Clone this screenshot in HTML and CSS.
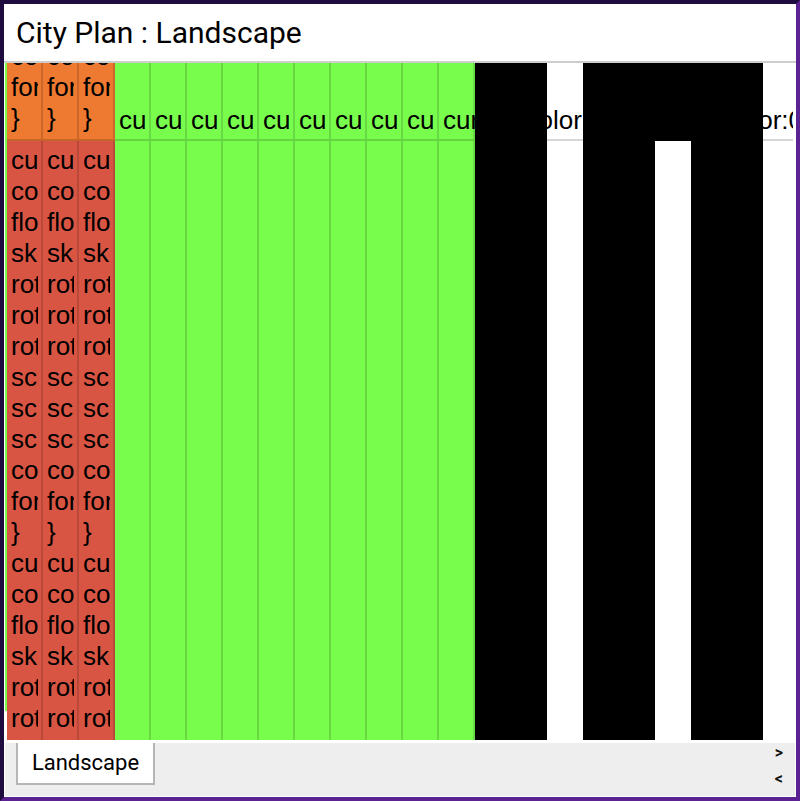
FILE: index.html
```html
<!DOCTYPE html>
<html lang="en">
<head>
<meta charset="utf-8">
<title>City Plan : Landscape</title>
<link rel="stylesheet" href="styles.css">
</head>
<body>
<div class="frame">
  <header class="title-bar"><h1 class="title">City Plan : Landscape</h1></header>
  <main class="sheet">
    <div class="edge"></div>
    <div class="table">
      <div class="row head">
        <div class="cell orange"><div class="clip"><div>color:#000;</div><div>font-size:24px;</div><div>}</div></div></div>
        <div class="cell orange"><div class="clip"><div>color:#000;</div><div>font-size:24px;</div><div>}</div></div></div>
        <div class="cell orange"><div class="clip"><div>color:#000;</div><div>font-size:24px;</div><div>}</div></div></div>
        <div class="cell green"><div class="clip"><div>cursor:pointer;</div></div></div>
        <div class="cell green"><div class="clip"><div>cursor:pointer;</div></div></div>
        <div class="cell green"><div class="clip"><div>cursor:pointer;</div></div></div>
        <div class="cell green"><div class="clip"><div>cursor:pointer;</div></div></div>
        <div class="cell green"><div class="clip"><div>cursor:pointer;</div></div></div>
        <div class="cell green"><div class="clip"><div>cursor:pointer;</div></div></div>
        <div class="cell green"><div class="clip"><div>cursor:pointer;</div></div></div>
        <div class="cell green"><div class="clip"><div>cursor:pointer;</div></div></div>
        <div class="cell green"><div class="clip"><div>cursor:pointer;</div></div></div>
        <div class="cell green"><div class="free"><div>cursor:<span class="nudge">color</span></div></div></div>
        <div class="cell black"></div>
        <div class="cell black"></div>
        <div class="cell blank"></div>
        <div class="cell black"></div>
        <div class="cell black"></div>
        <div class="cell black"></div>
        <div class="cell black"></div>
        <div class="cell black"><div class="free pull"><div>color:0</div></div></div>
        <div class="cell blank last"></div>
      </div>
      <div class="row body">
        <div class="cell red"><div class="clip"><div>cursor:pointer;</div><div>color:#000;</div><div>float:left;</div><div>skew:0deg;</div><div>rotateX:0deg;</div><div>rotateY:0deg;</div><div>rotateZ:0deg;</div><div>scaleX:1;</div><div>scaleY:1;</div><div>scaleZ:1;</div><div>color:#000;</div><div>font-size:24px;</div><div>}</div><div>cursor:pointer;</div><div>color:#000;</div><div>float:left;</div><div>skew:0deg;</div><div>rotateX:0deg;</div><div>rotateY:0deg;</div><div>rotateZ:0deg;</div></div></div>
        <div class="cell red"><div class="clip"><div>cursor:pointer;</div><div>color:#000;</div><div>float:left;</div><div>skew:0deg;</div><div>rotateX:0deg;</div><div>rotateY:0deg;</div><div>rotateZ:0deg;</div><div>scaleX:1;</div><div>scaleY:1;</div><div>scaleZ:1;</div><div>color:#000;</div><div>font-size:24px;</div><div>}</div><div>cursor:pointer;</div><div>color:#000;</div><div>float:left;</div><div>skew:0deg;</div><div>rotateX:0deg;</div><div>rotateY:0deg;</div><div>rotateZ:0deg;</div></div></div>
        <div class="cell red"><div class="clip"><div>cursor:pointer;</div><div>color:#000;</div><div>float:left;</div><div>skew:0deg;</div><div>rotateX:0deg;</div><div>rotateY:0deg;</div><div>rotateZ:0deg;</div><div>scaleX:1;</div><div>scaleY:1;</div><div>scaleZ:1;</div><div>color:#000;</div><div>font-size:24px;</div><div>}</div><div>cursor:pointer;</div><div>color:#000;</div><div>float:left;</div><div>skew:0deg;</div><div>rotateX:0deg;</div><div>rotateY:0deg;</div><div>rotateZ:0deg;</div></div></div>
        <div class="cell green"></div>
        <div class="cell green"></div>
        <div class="cell green"></div>
        <div class="cell green"></div>
        <div class="cell green"></div>
        <div class="cell green"></div>
        <div class="cell green"></div>
        <div class="cell green"></div>
        <div class="cell green"></div>
        <div class="cell green"></div>
        <div class="cell black"></div>
        <div class="cell black"></div>
        <div class="cell blank"></div>
        <div class="cell black"></div>
        <div class="cell black"></div>
        <div class="cell blank"></div>
        <div class="cell black"></div>
        <div class="cell black"></div>
        <div class="cell blank last"></div>
      </div>
    </div>
  </main>
  <footer class="tab-bar">
    <button class="tab" type="button">Landscape</button>
    <div class="arrows"><span>&gt;</span><span>&lt;</span></div>
  </footer>
</div>
</body>
</html>
```
FILE: styles.css
```css
* { box-sizing: border-box; }
html, body { margin: 0; padding: 0; }
body { background: #fff; }

.frame {
  width: 800px;
  height: 801px;
  display: flex;
  flex-direction: column;
  background: #fff;
  border-style: solid;
  border-width: 4px;
  border-color: #1e0c3e #5a2391 #5a2391 #1e0c3e;
  overflow: hidden;
}

.title-bar {
  height: 59px;
  flex: none;
  display: flex;
  align-items: center;
  padding-left: 12px;
  border-bottom: 2px solid #cdcdcd;
}
.title {
  margin: 0;
  font: 400 30px/1.2 Roboto, sans-serif;
  color: #000;
}

.sheet {
  height: 677px;
  flex: none;
  display: flex;
  padding-left: 1px;
}
.edge {
  width: 2px;
  height: 648px;
  flex: none;
  background: #79fd4d;
}
.table {
  width: 786px;
  flex: none;
  overflow: hidden;
  display: flex;
  flex-direction: column;
  font: 400 26px/31px "Liberation Sans", Arial, sans-serif;
  color: #000;
}

.row { display: flex; flex: none; }
.row.head { height: 78px; }
.row.body { height: 599px; }

.cell {
  width: 36px;
  flex: none;
  padding: 0 4px;
  display: flex;
  flex-direction: column;
  overflow: hidden;
  border-right: 2px solid rgba(0, 0, 0, 0.14);
}
.head .cell {
  justify-content: flex-end;
  border-bottom: 2px solid rgba(0, 0, 0, 0.16);
  padding-bottom: 3px;
}
.head .orange { padding-bottom: 5px; }
.body .cell { padding-top: 4px; }

.orange { background: #ed7a30; }
.red { background: #d95543; }
.green { background: #79fd4d; }
.black { background: #000; }
.blank { border-right: 0; }
.last { width: 30px; }

.clip { width: 27px; flex: none; overflow: hidden; white-space: nowrap; }
.free { width: 28px; flex: none; white-space: nowrap; }
.pull { margin-left: -6px; }
.nudge { margin-left: 3px; }
.cell:has(.free) { overflow: visible; }

.tab-bar {
  flex: none;
  height: 53px;
  margin: 3px 1px 0 1px;
  background: #eee;
  display: flex;
  justify-content: space-between;
  align-items: flex-start;
  padding-left: 11px;
}
.tab {
  width: 139px;
  height: 42px;
  margin: 0;
  padding: 0;
  background: #fff;
  border: 2px solid #b5b5b5;
  border-top: 0;
  border-radius: 0;
  font: 400 22px/1 Roboto, sans-serif;
  color: #000;
}
.arrows {
  display: flex;
  flex-direction: column;
  gap: 9px;
  padding: 1px 12px 0 0;
  font: 700 16px/17px Roboto, sans-serif;
  color: #111;
}
```
